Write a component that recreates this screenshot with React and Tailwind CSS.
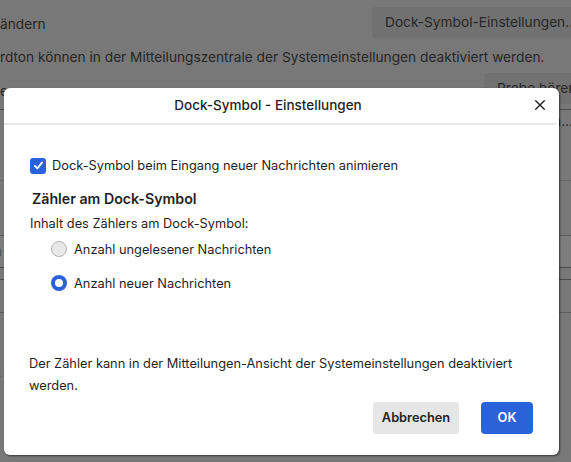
import React from 'react';

const font = { fontFamily: 'Inter, "Noto Sans", sans-serif' };

const BackgroundPage = () => (
  <div className="h-full w-full bg-[#787878] text-[13.7px] text-[#262626] overflow-hidden">
    {/* Row: Dock-Symbol */}
    <div className="grid h-[45px] grid-cols-[1fr_auto] items-start">
      <div className="pt-[14px] whitespace-nowrap">ändern</div>
      <div className="mr-[-30px] mt-[7px] flex h-[31px] w-[229px] items-center rounded-[4px] bg-[#717171] pl-[13px] whitespace-nowrap overflow-hidden">
        Dock-Symbol-Einstellungen...
      </div>
    </div>
    <div className="flex h-[24px] items-center whitespace-nowrap">
      <span>rdton können in der Mitteilungszentrale der Systemeinstellungen deaktiviert werden.</span>
    </div>
    <div className="grid h-[40px] grid-cols-[1fr_auto] items-start">
      <div className="pt-[12px]">en:</div>
      <div className="mr-[-30px] mt-[4px] flex h-[31px] w-[117px] items-center rounded-[4px] bg-[#717171] pl-[13px] whitespace-nowrap">
        Probe hören
      </div>
    </div>
    <div className="h-[1px] bg-[#4a4a4a]" />
    <div className="flex h-[70px] justify-end">
      <span className="mr-[-2px] pt-[1px]">n...</span>
    </div>
    <div className="h-[1px] bg-[#6c6c6c]" />
    <div className="h-[54px]" />
    <div className="h-[1px] bg-[#5a5a5a]" />
    <div className="flex h-[31px] items-center bg-[#7d7d7d]">
      <span className="-ml-[6px] text-[#555]">n</span>
    </div>
    <div className="h-[1px] bg-[#4a4a4a]" />
    <div className="h-[11px]" />
    <div className="h-[1px] bg-[#4a4a4a]" />
    <div className="h-[32px]" />
    <div className="h-[1px] bg-[#5a5a5a]" />
    <div className="flex h-[70px] items-end">
      <span className="-ml-[4px]">t</span>
    </div>
  </div>
);

const Checkbox = () => (
  <span className="flex h-[16px] w-[16px] shrink-0 items-center justify-center rounded-[3px] bg-[#2a63d9]">
    <svg viewBox="0 0 16 16" className="h-[13px] w-[13px]" fill="none" stroke="white" strokeWidth="2.2" strokeLinecap="round" strokeLinejoin="round">
      <path d="M3.5 8.4 L6.6 11.5 L12.5 4.2" />
    </svg>
  </span>
);

const Radio = ({ checked }) =>
  checked ? (
    <span className="flex h-[16px] w-[16px] shrink-0 items-center justify-center rounded-full bg-[#2a63d9]">
      <span className="h-[8px] w-[8px] rounded-full bg-white" />
    </span>
  ) : (
    <span className="h-[16px] w-[16px] shrink-0 rounded-full border border-[#b3b3b3] bg-[#e8e8e8]" />
  );

const Dialog = () => (
  <div className="absolute left-[4px] top-[88px] flex h-[367px] w-[555px] flex-col rounded-[6px] bg-white shadow-[1px_1px_2px_rgba(0,0,0,0.55)] text-[12.8px] text-[#1f1f1f]">
    {/* Header */}
    <div className="relative flex h-[35px] items-center justify-center pr-[27px]">
      <span className="text-[13.5px] font-medium">Dock-Symbol - Einstellungen</span>
      <button className="absolute right-[12px] top-[10px] flex h-[14px] w-[14px] items-center justify-center">
        <svg viewBox="0 0 14 14" className="h-[12px] w-[12px]" stroke="#1f1f1f" strokeWidth="1.6" strokeLinecap="round">
          <path d="M2 2 L12 12 M12 2 L2 12" />
        </svg>
      </button>
    </div>
    <div className="mr-[3px] h-[2px] bg-[#e8e8e8]" />

    {/* Body */}
    <div className="flex flex-1 flex-col pl-[26px] pr-[20px]">
      <label className="mt-[31px] flex items-center gap-[6px]">
        <Checkbox />
        <span>Dock-Symbol beim Eingang neuer Nachrichten animieren</span>
      </label>

      <h3 className="ml-[2px] mt-[13px] text-[14.2px] font-semibold">Zähler am Dock-Symbol</h3>
      <p className="mt-[5px]">Inhalt des Zählers am Dock-Symbol:</p>

      <div className="ml-[21px] mt-[6px] flex flex-col gap-[15px]">
        <label className="flex items-center gap-[7px]">
          <Radio checked={false} />
          <span>Anzahl ungelesener Nachrichten</span>
        </label>
        <label className="flex items-center gap-[7px]">
          <Radio checked />
          <span>Anzahl neuer Nachrichten</span>
        </label>
      </div>

      <p className="mt-auto -ml-[1px] leading-[22px]">
        Der Zähler kann in der Mitteilungen-Ansicht der Systemeinstellungen deaktiviert werden.
      </p>

      <div className="mb-[21px] mt-[5px] flex justify-end gap-[22px] pr-[6px]">
        <button className="h-[32px] w-[86px] rounded-[4px] bg-[#e6e6e6] font-semibold text-[#1f1f1f]">
          Abbrechen
        </button>
        <button className="h-[32px] w-[52px] rounded-[4px] bg-[#2a63d9] font-semibold text-white">
          OK
        </button>
      </div>
    </div>
  </div>
);

export default function App() {
  return (
    <div className="relative h-[462px] w-[571px] overflow-hidden" style={font}>
      <BackgroundPage />
      <Dialog />
    </div>
  );
}
